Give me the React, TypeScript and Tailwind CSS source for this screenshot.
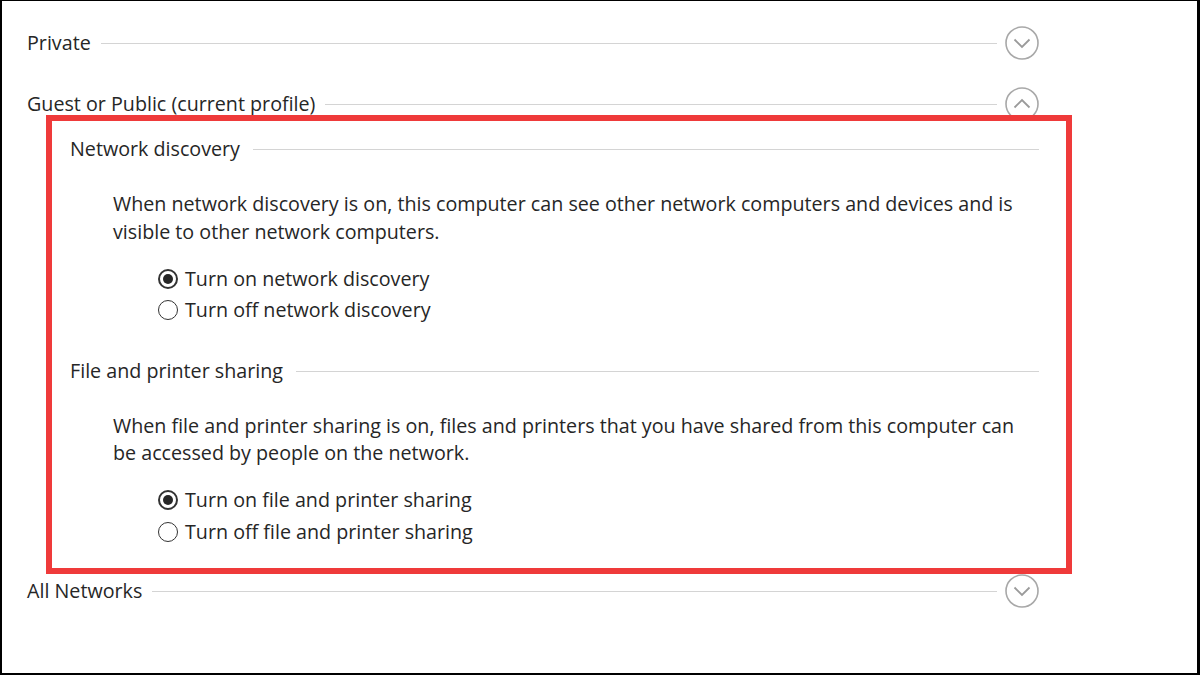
import React from "react";

const font = { fontFamily: '"Open Sans", "Noto Sans", sans-serif' };

const Chevron = ({ up }: { up?: boolean }) => (
  <svg width="34" height="34" viewBox="0 0 34 34" className="shrink-0">
    <circle cx="17" cy="17" r="16" fill="white" stroke="#a8a8a8" strokeWidth="1.6" />
    {up ? (
      <path d="M9.5 20.5 L17 13 L24.5 20.5" fill="none" stroke="#9a9a9a" strokeWidth="1.8" />
    ) : (
      <path d="M9.5 13.5 L17 21 L24.5 13.5" fill="none" stroke="#9a9a9a" strokeWidth="1.8" />
    )}
  </svg>
);

const ProfileRow = ({ title, up }: { title: string; up?: boolean }) => (
  <div className="flex items-center h-[34px]">
    <span className="text-[19.7px] leading-[28px] text-[#262626] whitespace-nowrap">{title}</span>
    <div className="flex-1 h-px bg-[#d4d4d4] ml-[10px] mr-[8px]" />
    <Chevron up={up} />
  </div>
);

const SubHeader = ({ title }: { title: string }) => (
  <div className="flex items-center h-[28px]">
    <span className="text-[19.7px] leading-[28px] text-[#262626] whitespace-nowrap">{title}</span>
    <div className="flex-1 h-px bg-[#d4d4d4] ml-[13px]" />
  </div>
);

const Radio = ({ checked, label }: { checked?: boolean; label: string }) => (
  <div className="flex items-center h-[31px]">
    <span
      className={
        checked
          ? "w-[20px] h-[20px] rounded-full border-2 border-[#333] flex items-center justify-center"
          : "w-[20px] h-[20px] rounded-full border border-[#333]"
      }
    >
      {checked && <span className="w-[10px] h-[10px] rounded-full bg-[#262626]" />}
    </span>
    <span className="ml-[7px] text-[19.7px] leading-[28px] text-[#262626] whitespace-nowrap">{label}</span>
  </div>
);

export default function App() {
  return (
    <div
      className="relative w-[1200px] h-[675px] bg-white border-l-2 border-t border-r-[3px] border-b-2 border-black overflow-hidden"
      style={font}
    >
      <div className="pl-[25px] pr-[158px] pt-[25px]">
        <ProfileRow title="Private" />
        <div className="mt-[27px]">
          <ProfileRow title="Guest or Public (current profile)" up />
        </div>

        <div className="pl-[43px] mt-[14px]">
          <SubHeader title="Network discovery" />
          <div className="pl-[43px]">
            <p className="mt-[27px] text-[19.7px] leading-[28px] text-[#262626] whitespace-nowrap">
              When network discovery is on, this computer can see other network computers and devices and is
              <br />
              visible to other network computers.
            </p>
            <div className="mt-[17px] pl-[45px]">
              <Radio checked label="Turn on network discovery" />
              <Radio label="Turn off network discovery" />
            </div>
          </div>

          <div className="mt-[32px]">
            <SubHeader title="File and printer sharing" />
          </div>
          <div className="pl-[43px]">
            <p className="mt-[27px] text-[19.7px] leading-[27px] text-[#262626] whitespace-nowrap">
              When file and printer sharing is on, files and printers that you have shared from this computer can
              <br />
              be accessed by people on the network.
            </p>
            <div className="mt-[18px] pl-[45px]">
              <Radio checked label="Turn on file and printer sharing" />
              <div className="h-px" />
              <Radio label="Turn off file and printer sharing" />
            </div>
          </div>
        </div>

        <div className="mt-[27px]">
          <ProfileRow title="All Networks" />
        </div>
      </div>

      <div className="absolute left-[44px] top-[114px] w-[1026px] h-[459px] border-[6px] border-[#ef3a3a] pointer-events-none" />
    </div>
  );
}
